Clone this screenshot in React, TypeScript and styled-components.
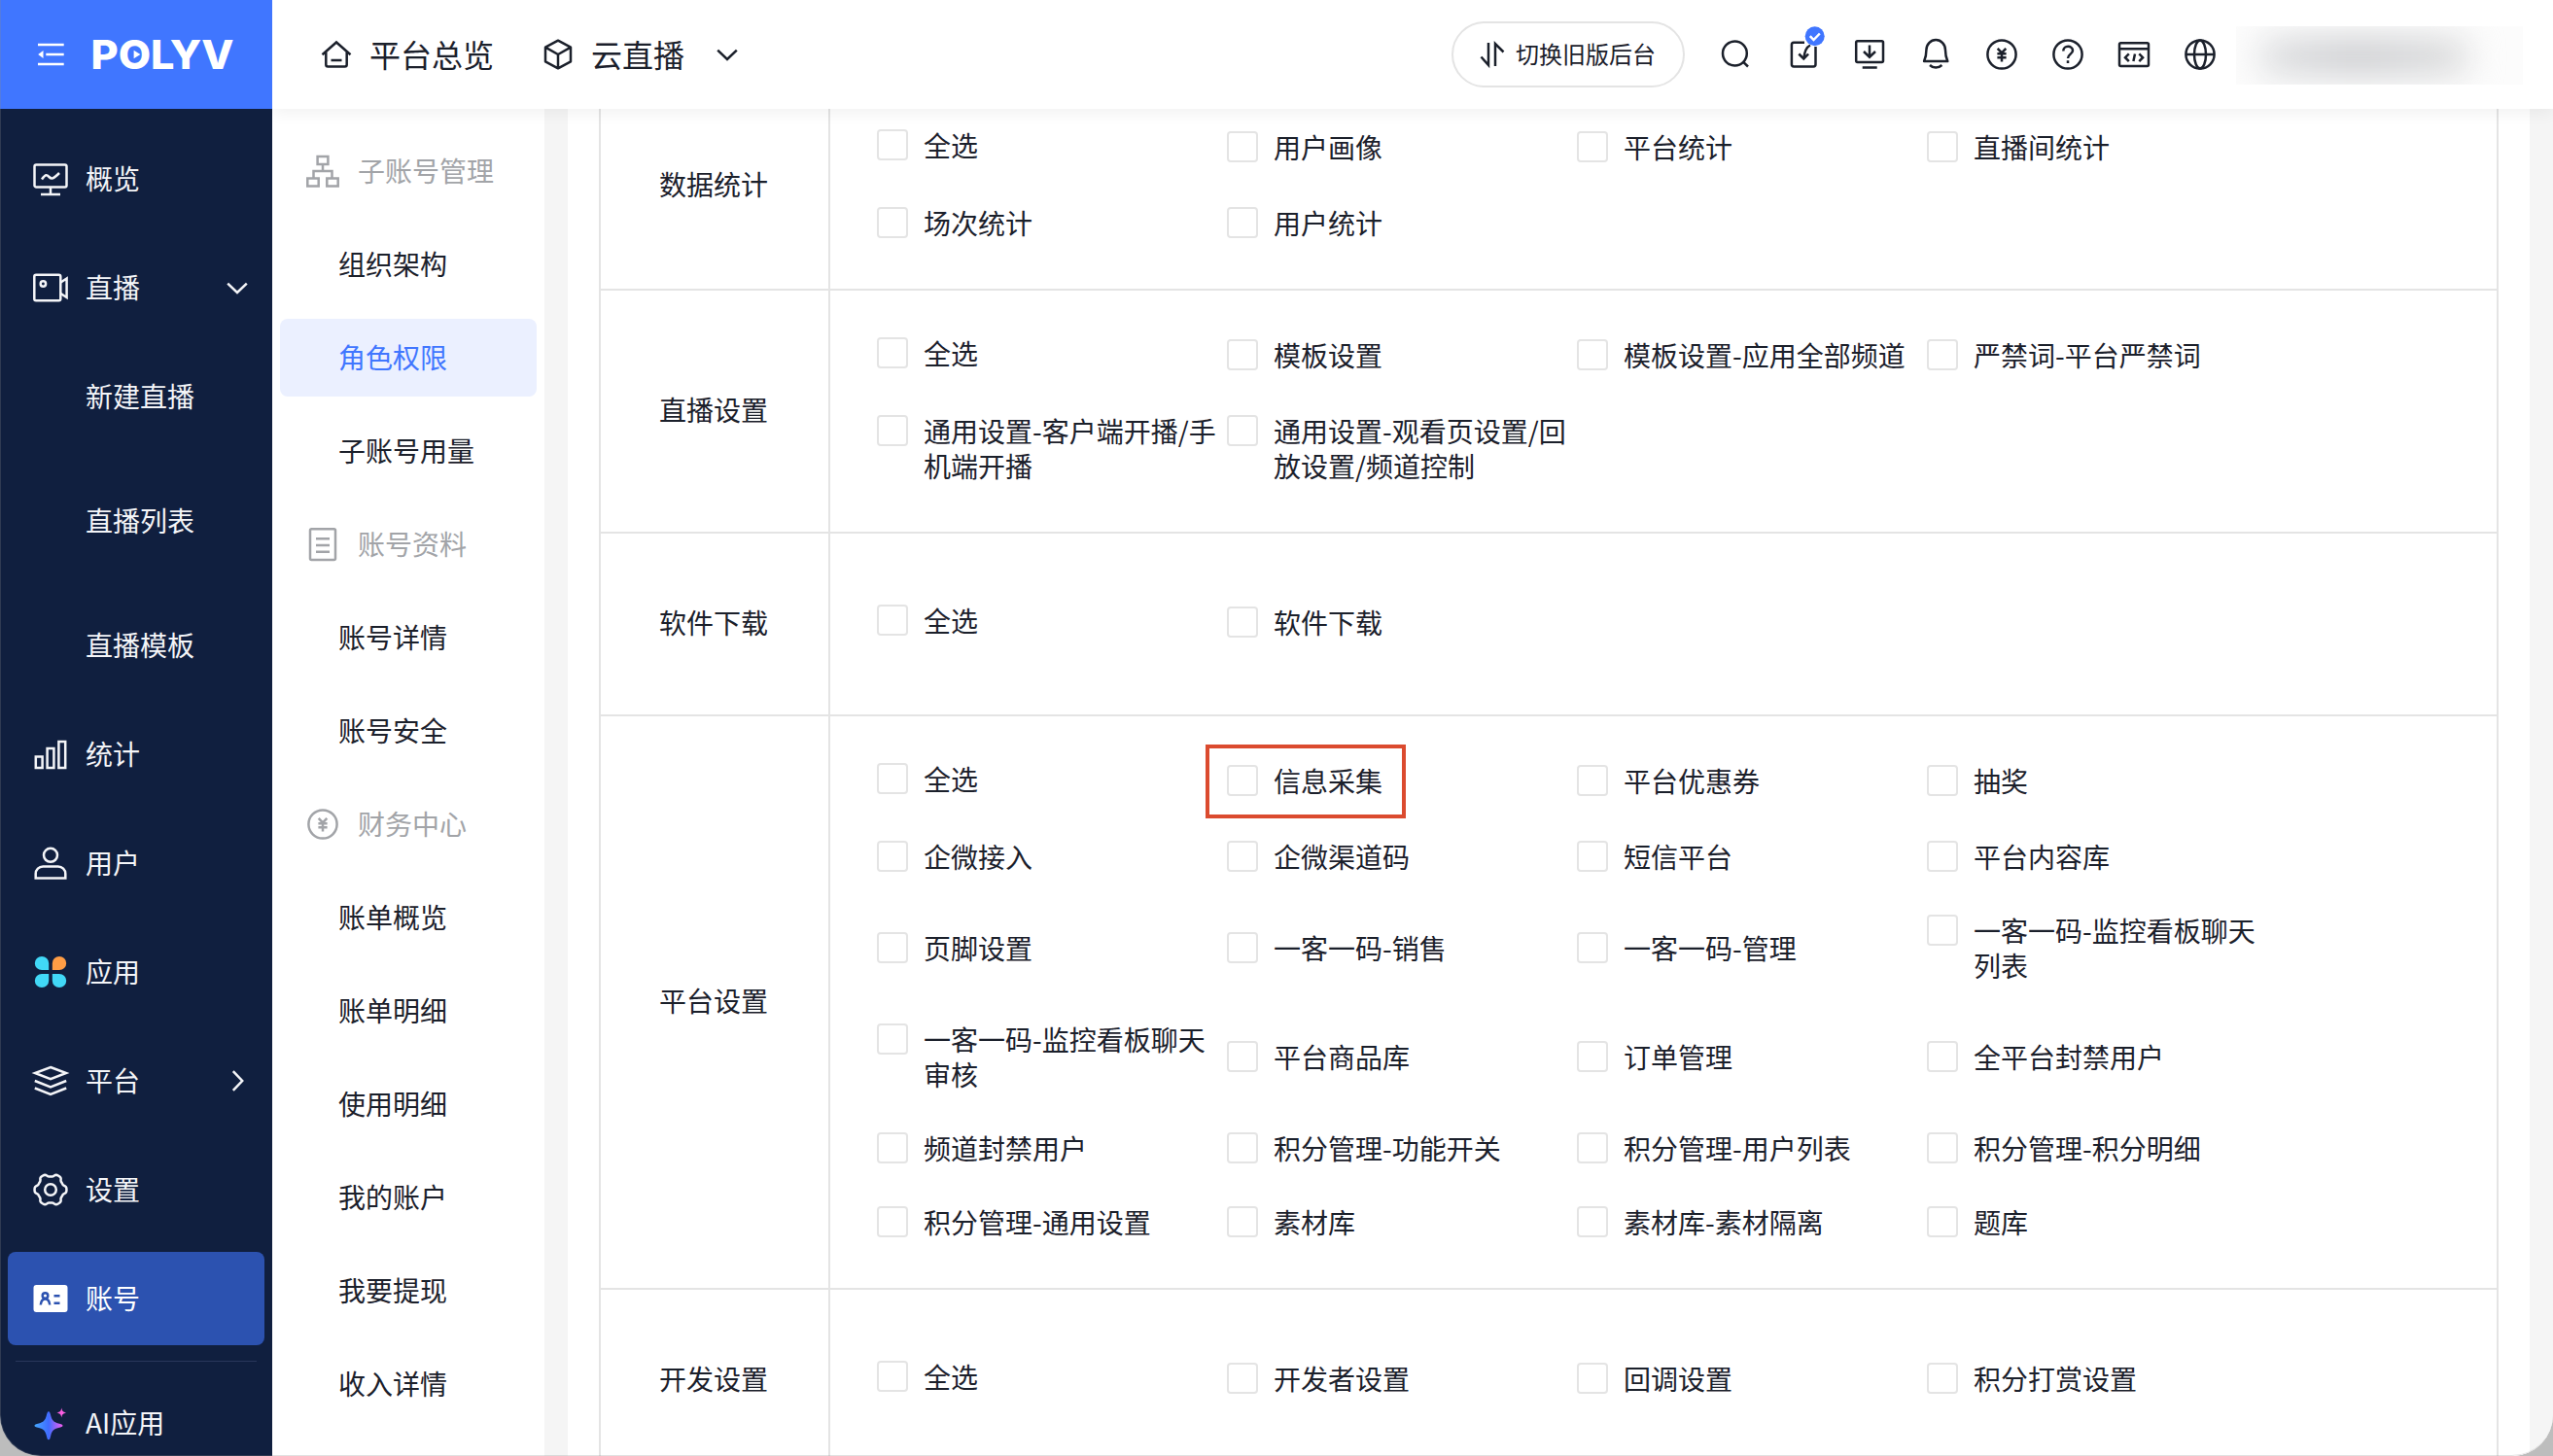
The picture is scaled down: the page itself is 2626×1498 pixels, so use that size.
import React from 'react';
import styled, { createGlobalStyle, css } from 'styled-components';

const GlobalStyle = createGlobalStyle`
  *, *::before, *::after { box-sizing: border-box; }
  html, body {
    height: 1498px;
    overflow: hidden;
  }
  body {
    margin: 0;
    background: #bdbdbd;
    font-family: "Noto Sans CJK SC", "PingFang SC", sans-serif;
    color: #1b202b;
  }
`;

/* ---------- shell ---------- */

const Window = styled.div`
  position: relative;
  display: grid;
  grid-template-columns: 280px 1fr;
  width: 2626px;
  height: 1498px;
  overflow: hidden;
  background: #fff;
  border-radius: 0 0 42px 42px;
  &::after {
    content: '';
    position: absolute;
    inset: 0;
    border-radius: 0 0 42px 42px;
    border: 1px solid rgba(140, 140, 140, 0.25);
    border-width: 0 0 1px 1px;
    pointer-events: none;
  }
`;

const Svg = styled.svg`
  display: block;
  flex: none;
  width: 36px;
  height: 36px;
  fill: none;
  stroke: currentColor;
  stroke-width: 2.5;
  overflow: visible;
`;

const Icon = ({ children }: { children: React.ReactNode }) => (
  <Svg viewBox="0 0 36 36">{children}</Svg>
);

/* ---------- primary sidebar ---------- */

const Sidebar = styled.aside`
  display: flex;
  flex-direction: column;
  height: 1498px;
  overflow: hidden;
  background: #101f3f;
  color: #f4f5f8;
`;

const Brand = styled.div`
  display: flex;
  align-items: center;
  flex: none;
  height: 112px;
  padding-left: 34px;
  gap: 26px;
  background: #4076ff;
  color: #fff;
`;

const Wordmark = styled.svg`
  display: block;
  width: 146px;
  height: 36px;
  overflow: visible;
  fill: #fff;
  font: 800 40.5px Inter, sans-serif;
`;

const Nav = styled.nav`
  display: flex;
  flex-direction: column;
  gap: 16px;
  padding: 24px 8px 0;
`;

const NavItem = styled.div<{ $active?: boolean }>`
  display: flex;
  align-items: center;
  flex: none;
  gap: 18px;
  height: 96px;
  padding: 0 10px 0 26px;
  border-radius: 8px;
  font-size: 28px;
  line-height: 40px;
  ${(p) => p.$active && css`background: #2c52b0; color: #fff;`}
`;

const NavText = styled.span`
  flex: 1;
  padding-bottom: 3px;
  white-space: nowrap;
`;

const SubNav = styled.div`
  display: flex;
  flex-direction: column;
  gap: 16px;
  margin: -8px 0;
`;

const SubNavItem = styled.div`
  display: flex;
  align-items: center;
  height: 112px;
  padding: 0 0 3px 80px;
  font-size: 28px;
  line-height: 40px;
`;

const Divider = styled.hr`
  width: 248px;
  height: 1px;
  margin: 0 auto -1px;
  border: 0;
  background: #29375a;
`;

/* ---------- header ---------- */

const Right = styled.div`
  display: flex;
  flex-direction: column;
  min-width: 0;
  height: 1498px;
  overflow: hidden;
`;

const Header = styled.header`
  position: relative;
  z-index: 1;
  display: flex;
  align-items: center;
  flex: none;
  height: 112px;
  padding: 0 31px 0 48px;
  background: #fff;
  box-shadow: 0 4px 16px rgba(0, 0, 0, 0.06);
`;

const Crumb = styled.div`
  display: flex;
  align-items: center;
  gap: 16px;
  margin-right: 48px;
  font-size: 32px;
  line-height: 44px;
  white-space: nowrap;
`;

const CrumbText = styled.span`
  padding-bottom: 3px;
`;

const CrumbArrow = styled.span`
  margin-left: 10px;
`;

const Tools = styled.div`
  display: flex;
  align-items: center;
  gap: 32px;
  margin-left: auto;
`;

const SwitchButton = styled.button`
  display: flex;
  align-items: center;
  gap: 6px;
  width: 240px;
  height: 68px;
  margin-right: 4px;
  padding: 0 0 0 22px;
  border: 2px solid #e4e4e4;
  border-radius: 34px;
  background: #fff;
  color: inherit;
  font-family: inherit;
  font-size: 24px;
  white-space: nowrap;
`;

const UserArea = styled.div`
  width: 295px;
  height: 60px;
  margin-left: -13px;
  margin-top: 1px;
  overflow: hidden;
  background: #fcfcfc;
`;

const UserBlur = styled.div`
  width: 216px;
  height: 38px;
  margin: 12px 0 0 24px;
  border-radius: 16px;
  background: linear-gradient(90deg, #dedfe1, #cccdd0 45%, #d4d5d7 75%, #dedede);
  filter: blur(17px);
`;

/* ---------- secondary menu ---------- */

const Body = styled.div`
  display: flex;
  flex: 1;
  min-height: 0;
`;

const Menu = styled.nav`
  display: flex;
  flex-direction: column;
  flex: none;
  gap: 16px;
  width: 280px;
  padding: 24px 8px 0;
`;

const MenuRow = styled.div<{ $active?: boolean }>`
  display: flex;
  align-items: center;
  flex: none;
  height: 80px;
  padding-left: 60px;
  border-radius: 8px;
  font-size: 28px;
  line-height: 40px;
  ${(p) => p.$active && css`background: #ebf0ff; color: #4076ff;`}
`;

const MenuHeading = styled(MenuRow)`
  padding-left: 26px;
  gap: 18px;
  color: #a2a4a8;
`;

const MenuText = styled.span`
  padding-bottom: 3px;
`;

/* ---------- permission table ---------- */

const Page = styled.main`
  flex: 1;
  min-width: 0;
  overflow: hidden;
  padding: 0 24px;
  background: #f5f5f5;
`;

const Sheet = styled.div`
  display: flow-root;
  height: 100%;
  padding: 0 32px;
  background: #fff;
`;

const Table = styled.div`
  margin-top: -27px;
  border: 2px solid #e4e4e4;
  border-top: 0;
  border-bottom: 0;
`;

const Group = styled.section`
  display: grid;
  grid-template-columns: 236px 1fr;
  min-height: 188px;
  border-bottom: 2px solid #e4e4e4;
`;

const GroupName = styled.div`
  display: flex;
  align-items: center;
  justify-content: center;
  padding: 0 2px 4px 0;
  border-right: 2px solid #e4e4e4;
  font-size: 28px;
  line-height: 36px;
`;

const Options = styled.div`
  display: grid;
  grid-template-columns: repeat(4, 360px);
  align-content: center;
  align-items: center;
  row-gap: 40px;
  padding: 48px;
`;

const Option = styled.label<{ $all?: boolean; $marked?: boolean }>`
  position: relative;
  display: flex;
  align-items: flex-start;
  gap: 16px;
  min-height: ${(p) => (p.$all ? 40 : 36)}px;
  padding-right: 8px;
  font-size: 28px;
  line-height: 36px;
  ${(p) => p.$marked && css`
    &::after {
      content: '';
      position: absolute;
      left: -22px;
      top: -21px;
      width: 206px;
      height: 76px;
      border: 4px solid #db4b2f;
    }
  `}
`;

const OptionText = styled.span`
  margin: -2px 0 2px;
`;

const Box = styled.span`
  flex: none;
  width: 32px;
  height: 32px;
  border: 2px solid #e4e4e4;
  border-radius: 4px;
  background: #fff;
`;

/* ---------- icons ---------- */

const Yen = () => (
  <Icon>
    <circle cx="18" cy="18" r="14.6" />
    <path d="M13.7 11.8 18 16.4 22.3 11.8M13.4 17.3h9.2M13.4 21.3h9.2M18 16.4v9" />
  </Icon>
);

const ChevronDown = () => <Icon><path d="M8.2 13.6 18 23 27.8 13.6" /></Icon>;
const ChevronRight = () => <Icon><path d="M13.8 8.2 23.2 18 13.8 27.8" /></Icon>;

const gearPath = Array.from({ length: 120 }, (_, i) => {
  const a = (i / 120) * Math.PI * 2;
  const c = Math.cos(6 * a);
  const r = 15 + 1.5 * Math.tanh(2 * c);
  return `${i ? 'L' : 'M'}${(18 + r * Math.cos(a)).toFixed(2)} ${(18 + r * Math.sin(a)).toFixed(2)}`;
}).join('') + 'Z';

const NAV_ICONS: Record<string, React.ReactNode> = {
  overview: (
    <Icon>
      <rect x="1.5" y="3.5" width="33" height="23" rx="1.8" />
      <path d="M18 26.5V33.5M8 34h20M9 18.5c4-5.5 5-5 7.5-2.5s4 2.5 10.5-4" />
    </Icon>
  ),
  live: (
    <Icon>
      <rect x="1.3" y="4.8" width="27" height="26.4" rx="1.8" />
      <path d="M28.5 12.5 34.6 8.5V28L28.5 24" />
      <circle cx="10.4" cy="14" r="2.7" />
    </Icon>
  ),
  stats: (
    <Icon>
      <path d="M2.8 20.5h6.8V32H2.8zM14.6 12h6.8v20h-6.8zM26.4 5h6.8v27h-6.8z" />
    </Icon>
  ),
  user: (
    <Icon>
      <circle cx="18" cy="9.8" r="7" />
      <path d="M2.7 33.5V29a7.5 7.5 0 0 1 7.5-7.5h15.6a7.5 7.5 0 0 1 7.5 7.5v4.5z" />
    </Icon>
  ),
  apps: (
    <Icon>
      <g stroke="none">
        <path fill="#41d8f7" d="M16.2 16H9A7.2 7 0 1 1 16.2 9z" />
        <path fill="#ff9d45" d="M19.8 16H27A7.2 7 0 1 0 19.8 9z" />
        <path fill="#41d8f7" d="M16.2 20H9A7.2 7 0 1 0 16.2 27z" />
        <path fill="#41d8f7" d="M19.8 20H27A7.2 7 0 1 1 19.8 27z" />
      </g>
    </Icon>
  ),
  platform: (
    <Icon>
      <path d="M18 4 34 10 18 16.2 2 10zM1.8 18 18 24.4 34.2 18M1.8 25.5 18 32 34.2 25.5" />
    </Icon>
  ),
  settings: (
    <Icon>
      <path d={gearPath} strokeLinejoin="round" />
      <circle cx="18" cy="18" r="5.8" />
    </Icon>
  ),
  account: (
    <Icon>
      <rect x="0.5" y="4" width="35" height="28" rx="3" fill="#fff" stroke="none" />
      <g stroke="#2c52b0">
        <circle cx="12.5" cy="15" r="2.8" />
        <path d="M7.8 24.5c.4-4 2-6 4.7-6s4.3 2 4.7 6M21.5 15.3h6M21.5 22.7h6" />
      </g>
    </Icon>
  ),
  ai: (
    <Icon>
      <defs>
        <linearGradient id="spark" x1="0" x2="1" y1="0" y2="0">
          <stop offset="0" stopColor="#45a8ff" />
          <stop offset="0.5" stopColor="#3f6cff" />
          <stop offset="1" stopColor="#f45cf0" />
        </linearGradient>
      </defs>
      <path stroke="none" fill="url(#spark)" d="M16 6.2c1.3 0 1.5 1.5 2.3 4.5 1.2 4.6 3 6.4 7.8 7.7 3 .8 4.400 1 4.400 2.300s-1.400 1.500-4.400 2.300c-4.800 1.300-6.600 3.100-7.800 7.700-.8 3-1 4.500-2.300 4.500s-1.500-1.500-2.300-4.500c-1.200-4.600-3-6.400-7.800-7.700-3-.8-4.400-1-4.400-2.300s1.400-1.500 4.400-2.300c4.800-1.300 6.600-3.100 7.800-7.700.8-3 1-4.500 2.300-4.500z" />
      <path stroke="none" fill="#f95ee0" d="M29.3 2.5c.8 3.5 1.400 4.200 5 5-3.600.8-4.200 1.500-5 5-.8-3.500-1.400-4.200-5-5 3.600-.8 4.200-1.500 5-5z" />
    </Icon>
  ),
};

const SECTION_ICONS: Record<string, React.ReactNode> = {
  org: (
    <Icon>
      <path d="M12.6 3h10.800v8H12.600zM2.300 25.500h11.400v8H2.300zM22.300 25.500h11.400v8H22.300zM18 11v7M8.500 25.500V18h19v7.500" />
    </Icon>
  ),
  doc: (
    <Icon>
      <rect x="5" y="2.2" width="26" height="31.8" rx="1.5" />
      <path d="M11 12.2h14M11 19h14M11 25.7h14" />
    </Icon>
  ),
  yen: <Yen />,
};

const TOOL_ICONS = [
  <Icon key="search">
    <circle cx="15.4" cy="17" r="12.4" />
    <path d="M24.2 25.8 29 30.5" />
  </Icon>,
  <Icon key="task">
    <path d="M19 5.8H8A2.2 2.2 0 0 0 5.9 8v20.200a2.200 2.200 0 0 0 2.200 2.200h20.200a2.200 2.200 0 0 0 2.200-2.200V10M25 8.500c-4 2-6 7-6.500 13.500M13.300 17.500l5 5 4.800-5" />
    <circle cx="29.7" cy="-0.7" r="10" fill="#4076ff" stroke="none" />
    <path d="M24.8-.8 28.5 3 34.8-3.5" stroke="#fff" />
  </Icon>,
  <Icon key="download">
    <rect x="4.2" y="4.3" width="27.8" height="21.7" rx="1.5" />
    <path d="M18 8.5v12M12 15l6 5.7 6-5.7M10.7 31.5h15" />
  </Icon>,
  <Icon key="bell">
    <path d="M8.4 13.5a9.800 10.500 0 0 1 19.600 0c0 6 .5 7.500 2.300 11.500H6.100c1.800-4 2.300-5.500 2.300-11.500zM12 29c3.500 3.400 8.800 3.400 12.400 0" strokeLinejoin="round" />
  </Icon>,
  <Yen key="yen" />,
  <Icon key="help">
    <circle cx="18" cy="18" r="14.6" />
    <path d="M13.3 14.5c0-6.3 9.700-6 9.700-.5 0 3.600-5 3.700-5 8M18 24.300v2.600" />
  </Icon>,
  <Icon key="code">
    <rect x="3" y="6.2" width="30" height="23.7" rx="1.5" />
    <path d="M3 12.3h30M12.8 17.3 9 21.2l3.800 3.900M23.300 17.300l3.800 3.900-3.800 3.900M19 17.500l-1.600 7.400" />
  </Icon>,
  <Icon key="globe">
    <circle cx="18" cy="18" r="14.6" />
    <ellipse cx="18" cy="18" rx="6" ry="14.6" />
    <path d="M3.3 18h29.4" />
  </Icon>,
];

/* ---------- data ---------- */

type NavEntry = { icon: string; label: string; active?: boolean; arrow?: 'down' | 'right'; sub?: string[] };

const NAV: NavEntry[] = [
  { icon: 'overview', label: '概览' },
  { icon: 'live', label: '直播', arrow: 'down', sub: ['新建直播', '直播列表', '直播模板'] },
  { icon: 'stats', label: '统计' },
  { icon: 'user', label: '用户' },
  { icon: 'apps', label: '应用' },
  { icon: 'platform', label: '平台', arrow: 'right' },
  { icon: 'settings', label: '设置' },
  { icon: 'account', label: '账号', active: true },
];

const MENU = [
  { icon: 'org', title: '子账号管理', items: ['组织架构', '角色权限', '子账号用量'] },
  { icon: 'doc', title: '账号资料', items: ['账号详情', '账号安全'] },
  { icon: 'yen', title: '财务中心', items: ['账单概览', '账单明细', '使用明细', '我的账户', '我要提现', '收入详情'] },
];

const GROUPS = [
  { name: '数据统计', options: ['用户画像', '平台统计', '直播间统计', '场次统计', '用户统计'] },
  {
    name: '直播设置',
    options: [
      '模板设置', '模板设置-应用全部频道', '严禁词-平台严禁词',
      '通用设置-客户端开播/手机端开播', '通用设置-观看页设置/回放设置/频道控制',
    ],
  },
  { name: '软件下载', options: ['软件下载'] },
  {
    name: '平台设置',
    options: [
      '信息采集', '平台优惠券', '抽奖',
      '企微接入', '企微渠道码', '短信平台', '平台内容库',
      '页脚设置', '一客一码-销售', '一客一码-管理', '一客一码-监控看板聊天列表',
      '一客一码-监控看板聊天审核', '平台商品库', '订单管理', '全平台封禁用户',
      '频道封禁用户', '积分管理-功能开关', '积分管理-用户列表', '积分管理-积分明细',
      '积分管理-通用设置', '素材库', '素材库-素材隔离', '题库',
    ],
  },
  { name: '开发设置', options: ['开发者设置', '回调设置', '积分打赏设置'] },
];

export default function App() {
  return (
    <>
      <GlobalStyle />
      <Window>
        <Sidebar>
          <Brand>
            <Icon>
              <path d="M5 8h26.7M13.3 18h18.4M5 28h26.7" />
              <path d="M5.2 18 10.5 14v8z" fill="currentColor" stroke="none" />
            </Icon>
            <Wordmark viewBox="0 0 146 36">
              <text x="-2.5" y="32.5" textLength="147" lengthAdjust="spacingAndGlyphs">POLYV</text>
              <path d="M41.6 13.8v8.400l6.800-4.200z" />
            </Wordmark>
          </Brand>
          <Nav>
            {NAV.map((n) => (
              <React.Fragment key={n.label}>
                <NavItem $active={n.active}>
                  {NAV_ICONS[n.icon]}
                  <NavText>{n.label}</NavText>
                  {n.arrow === 'down' && <ChevronDown />}
                  {n.arrow === 'right' && <ChevronRight />}
                </NavItem>
                {n.sub && (
                  <SubNav>
                    {n.sub.map((s) => <SubNavItem key={s}>{s}</SubNavItem>)}
                  </SubNav>
                )}
              </React.Fragment>
            ))}
            <Divider />
            <NavItem>
              {NAV_ICONS.ai}
              <NavText>AI应用</NavText>
            </NavItem>
          </Nav>
        </Sidebar>
        <Right>
          <Header>
            <Crumb>
              <Icon>
                <path d="M3.5 18.3 18 5.5 32.5 18.3M7.3 15v13.500a2 2 0 0 0 2 2h17.400a2 2 0 0 0 2-2V15M12.500 24h11" />
              </Icon>
              <CrumbText>平台总览</CrumbText>
            </Crumb>
            <Crumb>
              <Icon>
                <path d="M18 3.7 31 10.7V25.3L18 32.3 5 25.3V10.7zM5 10.7 18 18l13-7.300M18 18v14.300" strokeLinejoin="round" />
              </Icon>
              <CrumbText>云直播</CrumbText>
              <CrumbArrow><ChevronDown /></CrumbArrow>
            </Crumb>
            <Tools>
              <SwitchButton>
                <Icon>
                  <path d="M14 6v23L6.500 20.500M21 30V7l8.500 8.500" />
                </Icon>
                <CrumbText>切换旧版后台</CrumbText>
              </SwitchButton>
              {TOOL_ICONS}
              <UserArea><UserBlur /></UserArea>
            </Tools>
          </Header>
          <Body>
            <Menu>
              {MENU.map((m) => (
                <React.Fragment key={m.title}>
                  <MenuHeading>{SECTION_ICONS[m.icon]}<MenuText>{m.title}</MenuText></MenuHeading>
                  {m.items.map((i) => (
                    <MenuRow key={i} $active={i === '角色权限'}><MenuText>{i}</MenuText></MenuRow>
                  ))}
                </React.Fragment>
              ))}
            </Menu>
            <Page>
              <Sheet>
                <Table>
                  {GROUPS.map((g) => (
                    <Group key={g.name}>
                      <GroupName>{g.name}</GroupName>
                      <Options>
                        <Option $all><Box /><OptionText>全选</OptionText></Option>
                        {g.options.map((o) => (
                          <Option key={o} $marked={o === '信息采集'}><Box /><OptionText>{o}</OptionText></Option>
                        ))}
                      </Options>
                    </Group>
                  ))}
                </Table>
              </Sheet>
            </Page>
          </Body>
        </Right>
      </Window>
    </>
  );
}
